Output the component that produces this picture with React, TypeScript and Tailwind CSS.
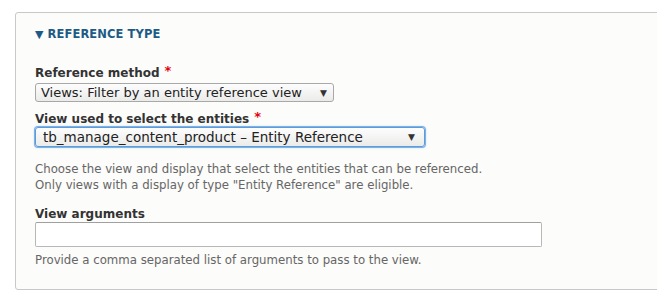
import * as React from "react";

const font = { fontFamily: '"DejaVu Sans", "Lucida Grande", Verdana, sans-serif' };

function Label({ text, required }: { text: string; required?: boolean }) {
  return (
    <div className="text-[12px] leading-[15px] font-bold text-[#333]">
      {text}
      {required && (
        <span className="relative -top-[2px] ml-[5px] text-[13px] text-[#e4000f]">*</span>
      )}
    </div>
  );
}

function Select({
  value,
  width,
  size,
  focused,
}: {
  value: string;
  width: string;
  size: string;
  focused?: boolean;
}) {
  return (
    <div
      className={
        (focused
          ? "border-[#5b9dd9] shadow-[0_0_0_1px_#7fb0e8,0_0_3px_#9cc3f0] h-[20px] pl-[7px] pr-[9px] "
          : "border-[#a8a8a8] h-[19px] pl-[5px] pr-[6px] ") +
        width +
        " " +
        size +
        " flex items-center justify-between rounded-[3px] border bg-gradient-to-b from-[#fdfdfd] to-[#ebebea] leading-[16px] text-[#222]"
      }
    >
      <span className="whitespace-nowrap">{value}</span>
      <span className="text-[9px] text-[#333]">▼</span>
    </div>
  );
}

export default function App() {
  return (
    <div className="h-[301px] overflow-hidden bg-white pl-[15px] pt-[12px]" style={font}>
      <div className="h-[278px] w-[660px] rounded-[3px] border border-[#c8c8c8] bg-[#fcfcfa] pl-[19px]">
        {/* summary */}
        <div className="pt-[14px] text-[11.5px] leading-[14px] font-bold tracking-[0.1px] text-[#1d5b86]">
          <span className="mr-[4px] text-[11px]">▼</span>REFERENCE TYPE
        </div>

        <div className="mt-[23px]">
          <Label text="Reference method" required />
          <div className="mt-[2px]">
            <Select
              value="Views: Filter by an entity reference view"
              width="w-[299px]"
              size="text-[13px]"
            />
          </div>
        </div>

        <div className="mt-[9px]">
          <Label text="View used to select the entities" required />
          <div className="mt-0">
            <Select
              value="tb_manage_content_product – Entity Reference"
              width="w-[390px]"
              size="text-[13.5px]"
              focused
            />
          </div>
          <div className="mt-[14px] text-[11.75px] leading-[16px] text-[#666]">
            Choose the view and display that select the entities that can be referenced.
            <br />
            Only views with a display of type "Entity Reference" are eligible.
          </div>
        </div>

        <div className="mt-[14px]">
          <Label text="View arguments" />
          <input
            type="text"
            className="mt-0 block h-[25px] w-[507px] rounded-[2px] border border-[#b8b8b8] border-t-[#a0a0a0] bg-white outline-none"
          />
          <div className="mt-[5px] text-[11.75px] leading-[16px] text-[#666]">
            Provide a comma separated list of arguments to pass to the view.
          </div>
        </div>
      </div>
    </div>
  );
}
